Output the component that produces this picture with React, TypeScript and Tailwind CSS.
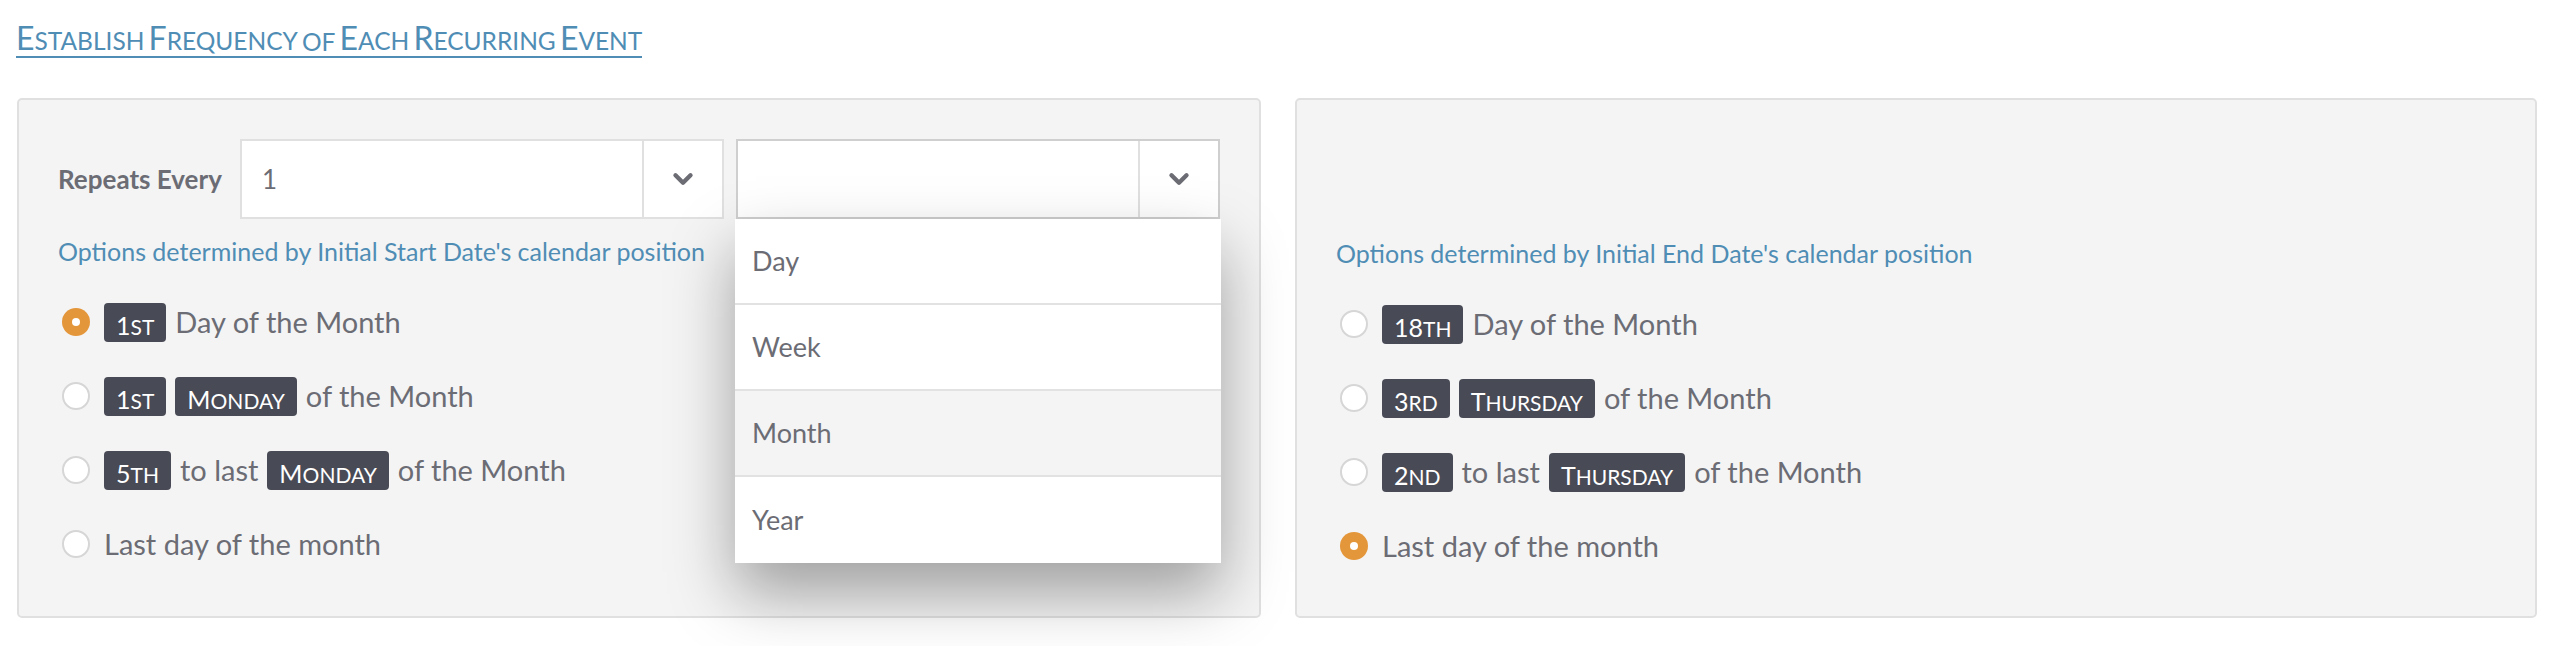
import { ChevronDown } from "lucide-react";

const font = { fontFamily: "Lato, 'Noto Sans', sans-serif" };

// hand-rolled small caps: leading capital / digits at full size, rest uppercased smaller
function SmallCaps({
	text,
	big,
	small,
}: {
	text: string;
	big: string;
	small: string;
}) {
	return (
		<>
			{text.split(" ").map((w, i) => {
				const m = w.match(/^(\d+|[A-Z])(.*)$/);
				const head = m ? m[1] : "";
				const tail = m ? m[2] : w;
				return (
					<span key={i}>
						{i > 0 && " "}
						{head && <span className={big}>{head}</span>}
						<span className={small}>{tail.toUpperCase()}</span>
					</span>
				);
			})}
		</>
	);
}

function Badge({ children }: { children: string }) {
	return (
		<span className="inline-flex h-[39px] items-center rounded-[4px] bg-[#484a55] px-[12px] pt-[2px] text-white leading-none">
			<SmallCaps text={children} big="text-[25px]" small="text-[21px]" />
		</span>
	);
}

function Radio({ checked }: { checked?: boolean }) {
	if (checked) {
		return (
			<span className="flex h-[28px] w-[28px] shrink-0 items-center justify-center rounded-full bg-[#e4963a]">
				<span className="h-[8px] w-[8px] rounded-full bg-white" />
			</span>
		);
	}
	return (
		<span className="h-[28px] w-[28px] shrink-0 rounded-full border-2 border-[#d6d6d6] bg-white" />
	);
}

function Row({
	checked,
	children,
}: {
	checked?: boolean;
	children: React.ReactNode;
}) {
	return (
		<div className="flex h-[74px] items-center gap-[14px] pl-[4px]">
			<Radio checked={checked} />
			<div className="flex items-center gap-[9px] text-[29px] text-[#6b6c74]">
				{children}
			</div>
		</div>
	);
}

function SelectBox({
	value,
	focused,
	children,
}: {
	value?: string;
	focused?: boolean;
	children?: React.ReactNode;
}) {
	return (
		<div className="relative">
			<div
				className={`flex h-[80px] w-[484px] border-2 bg-white ${
					focused ? "border-[#cfcfcf]" : "border-[#e0e0e0]"
				}`}
			>
				<div className="flex flex-1 items-center pl-[20px] text-[26px] text-[#6b6c74]">
					{value}
				</div>
				<div className="flex w-[80px] items-center justify-center border-l-2 border-[#e0e0e0]">
					<ChevronDown size={30} strokeWidth={3.5} className="text-[#6b6c74]" />
				</div>
			</div>
			{children}
		</div>
	);
}

export default function App() {
	const options = ["Day", "Week", "Month", "Year"];
	return (
		<div
			className="h-[646px] w-[2564px] overflow-hidden bg-white px-[16px] pt-[22px]"
			style={font}
		>
			<h2 className="flex h-[36px] w-fit items-end border-b-2 border-[#4f8db5] pb-[2px] text-[#4f8db5] leading-none whitespace-pre">
				<SmallCaps
					text="Establish Frequency of Each Recurring Event"
					big="text-[32px]"
					small="text-[24.5px]"
				/>
			</h2>

			<div className="mt-[40px] flex gap-[34px] pl-[1px]">
				{/* Start */}
				<div className="h-[520px] w-[1244px] rounded-[5px] border-2 border-[#e0e0e0] bg-[#f4f4f4] px-[39px] pt-[39px]">
					<div className="flex items-center gap-[12px]">
						<span className="w-[170px] shrink-0 whitespace-nowrap text-[26px] font-bold text-[#6b6c74]">
							Repeats Every
						</span>
						<SelectBox value="1" />
						<SelectBox focused>
							<div className="absolute left-[-1px] top-[80px] z-10 w-[486px] bg-white shadow-[0_30px_60px_rgba(0,0,0,0.35)]">
								{options.map((o, i) => (
									<div
										key={o}
										className={`flex h-[86px] items-center pl-[17px] text-[27px] text-[#6b6c74] ${
											i < options.length - 1 ? "border-b-2 border-[#e2e2e2]" : ""
										} ${o === "Month" ? "bg-[#f4f4f4]" : "bg-white"}`}
									>
										{o}
									</div>
								))}
							</div>
						</SelectBox>
					</div>
					<p className="mt-[16px] text-[25px] text-[#4f8db5] leading-[32px]">
						Options determined by Initial Start Date's calendar position
					</p>
					<div className="mt-[18px]">
						<Row checked>
							<Badge>1st</Badge>
							<span>Day of the Month</span>
						</Row>
						<Row>
							<Badge>1st</Badge>
							<Badge>Monday</Badge>
							<span>of the Month</span>
						</Row>
						<Row>
							<Badge>5th</Badge>
							<span>to last</span>
							<Badge>Monday</Badge>
							<span>of the Month</span>
						</Row>
						<Row>
							<span>Last day of the month</span>
						</Row>
					</div>
				</div>

				{/* End */}
				<div className="h-[520px] w-[1242px] rounded-[5px] border-2 border-[#e0e0e0] bg-[#f4f4f4] px-[39px] pt-[39px]">
					<div className="h-[80px]" />
					<p className="mt-[18px] text-[25px] text-[#4f8db5] leading-[32px]">
						Options determined by Initial End Date's calendar position
					</p>
					<div className="mt-[18px]">
						<Row>
							<Badge>18th</Badge>
							<span>Day of the Month</span>
						</Row>
						<Row>
							<Badge>3rd</Badge>
							<Badge>Thursday</Badge>
							<span>of the Month</span>
						</Row>
						<Row>
							<Badge>2nd</Badge>
							<span>to last</span>
							<Badge>Thursday</Badge>
							<span>of the Month</span>
						</Row>
						<Row checked>
							<span>Last day of the month</span>
						</Row>
					</div>
				</div>
			</div>
		</div>
	);
}
